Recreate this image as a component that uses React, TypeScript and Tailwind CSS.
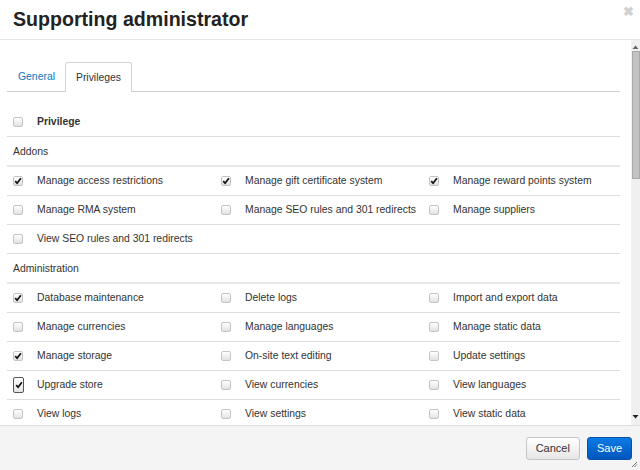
import React from 'react';

type Item = { label: string; checked?: boolean; focus?: boolean };
type Group = { title: string; rows: Item[][] };

const groups: Group[] = [
  {
    title: 'Addons',
    rows: [
      [
        { label: 'Manage access restrictions', checked: true },
        { label: 'Manage gift certificate system', checked: true },
        { label: 'Manage reward points system', checked: true },
      ],
      [{ label: 'Manage RMA system' }, { label: 'Manage SEO rules and 301 redirects' }, { label: 'Manage suppliers' }],
      [{ label: 'View SEO rules and 301 redirects' }],
    ],
  },
  {
    title: 'Administration',
    rows: [
      [{ label: 'Database maintenance', checked: true }, { label: 'Delete logs' }, { label: 'Import and export data' }],
      [{ label: 'Manage currencies' }, { label: 'Manage languages' }, { label: 'Manage static data' }],
      [{ label: 'Manage storage', checked: true }, { label: 'On-site text editing' }, { label: 'Update settings' }],
      [{ label: 'Upgrade store', checked: true, focus: true }, { label: 'View currencies' }, { label: 'View languages' }],
      [{ label: 'View logs' }, { label: 'View settings' }, { label: 'View static data' }],
    ],
  },
];

function Checkbox({ checked, focus }: { checked?: boolean; focus?: boolean }) {
  return (
    <span
      className={
        focus
          ? 'flex h-[16px] w-[11px] shrink-0 items-center justify-center rounded-[2px] border border-[#555] bg-gradient-to-b from-white to-[#e4e4e4]'
          : 'flex h-[10px] w-[10px] shrink-0 items-center justify-center rounded-[2px] border border-[#c4c4c4] bg-gradient-to-b from-white to-[#e2e2e2]'
      }
    >
      {checked && (
        <svg width="8" height="8" viewBox="0 0 8 8">
          <path d="M1.2 4.2 L3.1 6.2 L6.9 1.2" fill="none" stroke="#111" strokeWidth="1.7" />
        </svg>
      )}
    </span>
  );
}

function Cell({ item }: { item?: Item }) {
  if (!item) return <div />;
  return (
    <div className="flex items-center pl-[6px]">
      <span className="flex w-[24px] items-center">
        <Checkbox checked={item.checked} focus={item.focus} />
      </span>
      <span>{item.label}</span>
    </div>
  );
}

export default function App() {
  return (
    <div
      className="flex h-[470px] w-[640px] flex-col overflow-hidden bg-white text-[10.4px] text-[#333]"
      style={{ fontFamily: '"Liberation Sans", Arial, sans-serif' }}
    >
      <div className="relative flex h-[40px] shrink-0 items-center border-b border-[#e5e5e5] pl-[13px] pt-[1px]">
        <h1 className="text-[19.6px] font-bold leading-none text-[#222]">Supporting administrator</h1>
        <span className="absolute right-[6px] top-[5px] text-[13px] font-bold leading-none text-[#d0d0d0]">✖</span>
      </div>

      <div className="flex min-h-0 flex-1">
        <div className="min-w-0 flex-1 overflow-hidden pl-[7px] pr-[11px] pt-[22px]">
          <div className="flex h-[30px] items-end border-b border-[#cfcfcf] pl-[4px]">
            <div className="flex h-[29px] items-center px-[7px] text-[#0b78c4]">General</div>
            <div className="-mb-px ml-[3px] flex h-[30px] items-center rounded-t-[3px] border border-b-0 border-[#d4d4d4] bg-white px-[10px] text-[#333]">
              Privileges
            </div>
          </div>

          <div className="mt-[16px]">
            <div className="grid h-[29px] grid-cols-[208px_208px_1fr] items-center border-b border-[#dddddd]">
              <div className="flex items-center pl-[6px]">
                <span className="flex w-[24px] items-center">
                  <Checkbox />
                </span>
                <span className="font-bold">Privilege</span>
              </div>
            </div>
            {groups.map((g) => (
              <div key={g.title}>
                <div className="flex h-[30px] items-center border-b-2 border-[#e8e8e8] pl-[6px] pt-[1px]">{g.title}</div>
                {g.rows.map((row, i) => (
                  <div key={i} className="grid h-[29px] grid-cols-[208px_208px_1fr] items-center border-b border-[#dddddd]">
                    <Cell item={row[0]} />
                    <Cell item={row[1]} />
                    <Cell item={row[2]} />
                  </div>
                ))}
              </div>
            ))}
          </div>
        </div>

        <div className="flex w-[9px] shrink-0 flex-col items-center bg-[#f0f0f0]">
          <svg width="7" height="8" viewBox="0 0 7 8" className="mt-[3px]">
            <path d="M0.5 6 L3.5 2.5 L6.5 6 Z" fill="#666" />
          </svg>
          <div className="h-[128px] w-[8px] border border-[#a9a9a9] bg-[#c2c2c2]" />
          <div className="flex-1" />
          <svg width="7" height="8" viewBox="0 0 7 8" className="mb-[4px]">
            <path d="M0.5 2 L3.5 5.5 L6.5 2 Z" fill="#222" />
          </svg>
        </div>
      </div>

      <div className="relative flex h-[45px] shrink-0 items-center justify-end gap-[7px] border-t border-[#dddddd] bg-[#f4f4f4] pr-[8px]">
        <button className="h-[23px] rounded-[3px] border border-[#c5c5c5] bg-gradient-to-b from-white to-[#e6e6e6] px-[9px] text-[11px] text-[#333]">
          Cancel
        </button>
        <button className="h-[23px] rounded-[3px] border border-[#0a4fa8] bg-gradient-to-b from-[#0d7ae6] to-[#0356bd] px-[9px] text-[11px] text-white">
          Save
        </button>
        <svg width="7" height="7" viewBox="0 0 7 7" className="absolute bottom-[2px] right-[2px]">
          <path d="M6 1 L1 6 M6 3.5 L3.5 6" stroke="#777" strokeWidth="1" />
        </svg>
      </div>
    </div>
  );
}
